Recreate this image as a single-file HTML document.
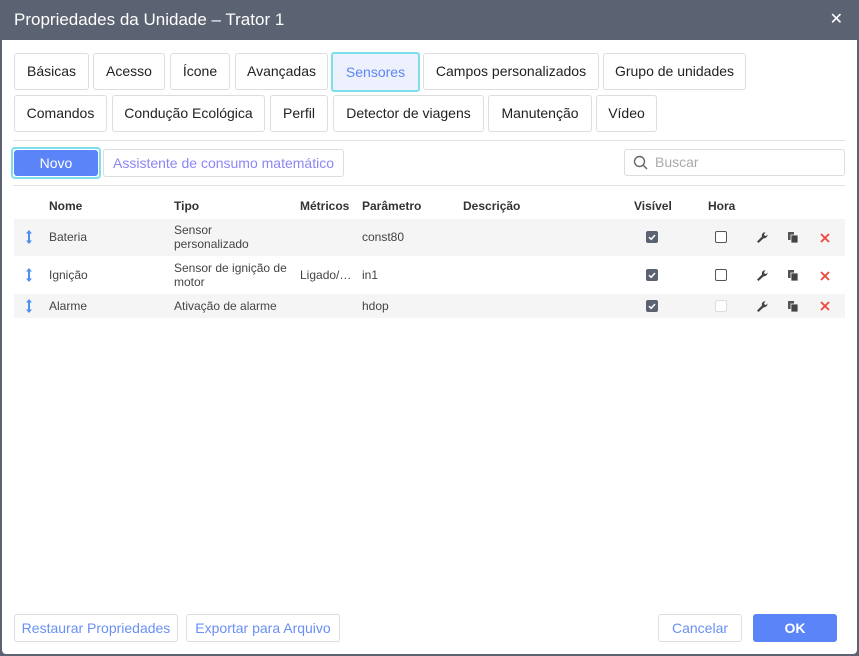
<!DOCTYPE html>
<html><head><meta charset="utf-8"><style>
*{box-sizing:border-box;margin:0;padding:0}
body{width:859px;height:656px;background:#5b6271;font-family:"Liberation Sans",sans-serif;position:relative;overflow:hidden;font-size:13px;color:#333}
.hdr{position:absolute;left:0;top:0;width:859px;height:40px;color:#fff;font-size:17px;line-height:40px;padding-left:14px}
.x{position:absolute;right:16px;top:0;font-size:16px;line-height:40px;color:#fff}
.body{position:absolute;left:2px;top:40px;width:855px;height:614px;background:#fff;border-radius:0 0 4px 4px}
.a{position:absolute}
.tab{position:absolute;height:37px;border:1px solid #ddd;border-radius:3px;line-height:35px;text-align:center;font-size:14px;color:#222;background:#fff}
.tab.on{background:#edf1fd;color:#5d86f5;border:2px solid #7ddfee;line-height:33px}
.btn{position:absolute;border:1px solid #ddd;border-radius:3px;text-align:center;color:#6a8ff5;font-size:14px;background:#fff}
.sep{position:absolute;left:13px;width:832px;height:1px;background:#e2e2e2}
.th{position:absolute;top:199px;font-size:12px;font-weight:bold;color:#333}
.row{position:absolute;left:14px;width:831px}
.c{position:absolute;font-size:12px;color:#444;line-height:14px}
.cb{position:absolute;width:12px;height:12px;border-radius:2px}
.cb.on{background:#5b6271}
.cb.off{border:1px solid #555;background:#fff}
.cb.dis{border:1px solid #ddd;background:#fff}
</style></head><body>
<div class="hdr">Propriedades da Unidade – Trator 1</div>
<div class="x">✕</div>
<div class="body"></div>
<div class="tab" style="left:14px;top:53px;width:75px">Básicas</div>
<div class="tab" style="left:93px;top:53px;width:72px">Acesso</div>
<div class="tab" style="left:170px;top:53px;width:60px">Ícone</div>
<div class="tab" style="left:235px;top:53px;width:93px">Avançadas</div>
<div class="tab on" style="left:331px;top:52px;width:89px;height:40px;line-height:36px">Sensores</div>
<div class="tab" style="left:423px;top:53px;width:176px">Campos personalizados</div>
<div class="tab" style="left:603px;top:53px;width:143px">Grupo de unidades</div>
<div class="tab" style="left:14px;top:95px;width:93px">Comandos</div>
<div class="tab" style="left:112px;top:95px;width:153px">Condução Ecológica</div>
<div class="tab" style="left:270px;top:95px;width:58px">Perfil</div>
<div class="tab" style="left:333px;top:95px;width:151px">Detector de viagens</div>
<div class="tab" style="left:488px;top:95px;width:104px">Manutenção</div>
<div class="tab" style="left:596px;top:95px;width:61px">Vídeo</div>
<div class="sep" style="top:140px"></div>
<div class="a" style="left:11px;top:147px;width:90px;height:32px;border:2px solid #7ddfee;border-radius:4px"></div>
<div class="a" style="left:14px;top:150px;width:84px;height:26px;background:#5b84f8;border-radius:3px;color:#fff;text-align:center;line-height:26px;font-size:14px">Novo</div>
<div class="btn" style="left:103px;top:149px;width:241px;height:28px;line-height:26px;color:#8a87f5">Assistente de consumo matemático</div>
<div class="a" style="left:624px;top:149px;width:221px;height:27px;border:1px solid #ddd;border-radius:3px"></div>
<svg class="a" style="left:633px;top:155px" width="16" height="16" viewBox="0 0 16 16"><circle cx="6.5" cy="6.5" r="5" fill="none" stroke="#666" stroke-width="1.4"/><path d="M10 10L14 14" stroke="#666" stroke-width="1.5"/></svg>
<div class="a" style="left:655px;top:154px;font-size:14px;color:#aaa">Buscar</div>
<div class="sep" style="top:185px"></div>
<div class="th" style="left:49px">Nome</div>
<div class="th" style="left:174px">Tipo</div>
<div class="th" style="left:300px">Métricos</div>
<div class="th" style="left:362px">Parâmetro</div>
<div class="th" style="left:463px">Descrição</div>
<div class="th" style="left:634px">Visível</div>
<div class="th" style="left:708px">Hora</div>

<div class="row" style="top:219px;height:37px;background:#f5f5f5"></div>
<div class="row" style="top:256px;height:38px;background:#fff"></div>
<div class="row" style="top:294px;height:24px;background:#f5f5f5"></div>

<div class="c" style="left:49px;top:230px">Bateria</div>
<div class="c" style="left:174px;top:223px">Sensor<br>personalizado</div>
<div class="c" style="left:362px;top:230px">const80</div>
<div class="c" style="left:49px;top:268px">Ignição</div>
<div class="c" style="left:174px;top:261px">Sensor de ignição de<br>motor</div>
<div class="c" style="left:300px;top:268px">Ligado/…</div>
<div class="c" style="left:362px;top:268px">in1</div>
<div class="c" style="left:49px;top:299px">Alarme</div>
<div class="c" style="left:174px;top:299px">Ativação de alarme</div>
<div class="c" style="left:362px;top:299px">hdop</div>

<svg width="0" height="0" style="position:absolute"><defs>
<g id="ud"><path d="M4 1L1 4.5H3V11.5H1L4 15L7 11.5H5V4.5H7Z" fill="#4a90f0"/></g>
<g id="ck"><rect width="12" height="12" rx="2" fill="#5b6271"/><path d="M3 6.2L5.2 8.3L9 4" stroke="#fff" stroke-width="1.5" fill="none"/></g>
<g id="wr"><path d="M2 10.5L7 5.5C6.5 4 7 2 9 1.5C10 1.3 10.5 1.5 10.5 1.5L9 3.2L9.6 4.6L11 5L12.5 3.5C12.7 5.5 11 7.3 8.7 7.2L3.5 12Z" fill="#444"/></g>
<g id="cp"><rect x="0" y="0" width="6" height="8" fill="#555"/><rect x="3" y="3" width="7" height="8" fill="#444" stroke="#f5f5f5" stroke-width="0.8"/></g>
<g id="dl"><path d="M1 1L9 9M9 1L1 9" stroke="#f0443a" stroke-width="1.8"/></g>
</defs></svg>

<svg class="a" style="left:25px;top:229px" width="8" height="16"><use href="#ud"/></svg>
<svg class="a" style="left:25px;top:267px" width="8" height="16"><use href="#ud"/></svg>
<svg class="a" style="left:25px;top:298px" width="8" height="16"><use href="#ud"/></svg>

<svg class="a" style="left:646px;top:231px" width="12" height="12"><use href="#ck"/></svg>
<svg class="a" style="left:646px;top:269px" width="12" height="12"><use href="#ck"/></svg>
<svg class="a" style="left:646px;top:300px" width="12" height="12"><use href="#ck"/></svg>
<div class="cb off" style="left:715px;top:231px"></div>
<div class="cb off" style="left:715px;top:269px"></div>
<div class="cb dis" style="left:715px;top:300px"></div>

<svg class="a" style="left:755px;top:231px" width="13" height="13"><use href="#wr"/></svg>
<svg class="a" style="left:755px;top:269px" width="13" height="13"><use href="#wr"/></svg>
<svg class="a" style="left:755px;top:300px" width="13" height="13"><use href="#wr"/></svg>
<svg class="a" style="left:788px;top:232px" width="11" height="11"><use href="#cp"/></svg>
<svg class="a" style="left:788px;top:270px" width="11" height="11"><use href="#cp"/></svg>
<svg class="a" style="left:788px;top:301px" width="11" height="11"><use href="#cp"/></svg>
<svg class="a" style="left:820px;top:233px" width="10" height="10"><use href="#dl"/></svg>
<svg class="a" style="left:820px;top:271px" width="10" height="10"><use href="#dl"/></svg>
<svg class="a" style="left:820px;top:301px" width="10" height="10"><use href="#dl"/></svg>

<div class="btn" style="left:14px;top:614px;width:164px;height:28px;line-height:26px">Restaurar Propriedades</div>
<div class="btn" style="left:186px;top:614px;width:154px;height:28px;line-height:26px">Exportar para Arquivo</div>
<div class="btn" style="left:658px;top:614px;width:84px;height:28px;line-height:26px">Cancelar</div>
<div class="a" style="left:753px;top:614px;width:84px;height:28px;background:#5b84f8;border-radius:3px;color:#fff;text-align:center;line-height:28px;font-size:14px;font-weight:bold">OK</div>
</body></html>
